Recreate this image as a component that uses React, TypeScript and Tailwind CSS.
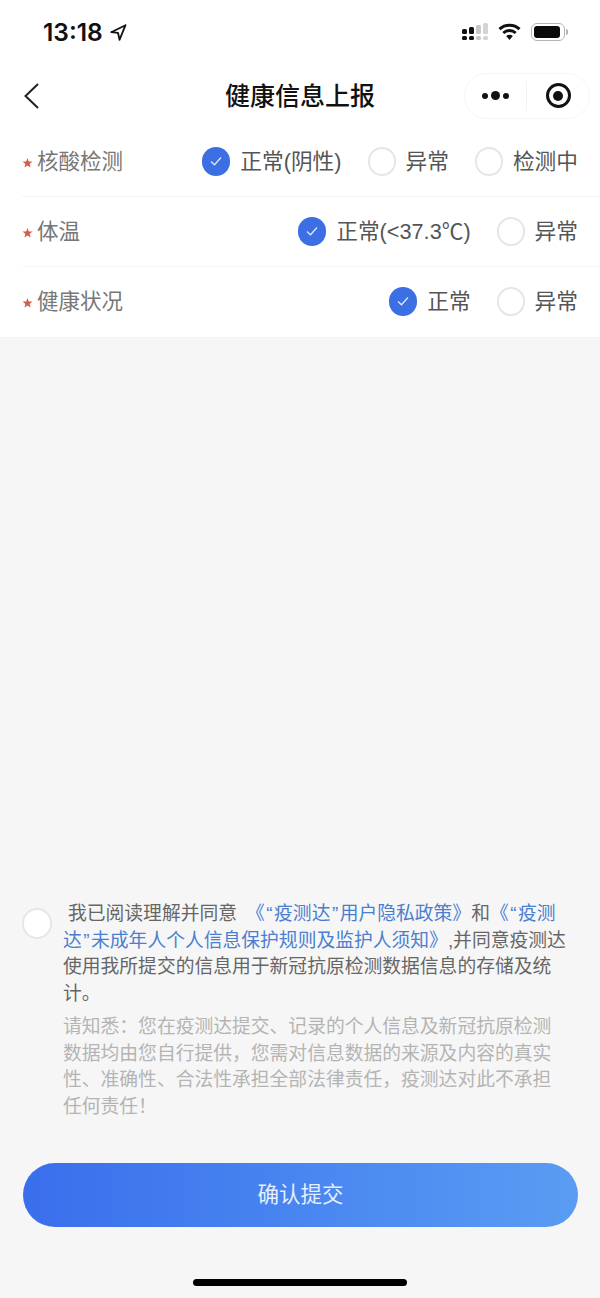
const cjk = { fontFamily: '"Liberation Sans", "Noto Sans CJK SC", "Noto Sans", sans-serif' };

function Radio({ checked = false }: { checked?: boolean }) {
  if (checked) {
    return (
      <span className="flex h-[29px] w-[28px] items-center justify-center rounded-full bg-[#3b6fe3]">
        <svg width="14" height="12" viewBox="0 0 14 12" fill="none">
          <path d="M2 6.5 L5.5 9.8 L12 2.5" stroke="#dfe8fb" strokeWidth="1.3" />
        </svg>
      </span>
    );
  }
  return <span className="h-[29px] w-[28px] rounded-full border-2 border-[#e6e6e6] bg-white" />;
}

function Row({ label, options, last = false }: { label: string; options: string[]; last?: boolean }) {
  return (
    <div className={last ? "flex h-[70px] items-center justify-between border-b border-transparent pr-[22px]" : "flex h-[70px] items-center justify-between border-b border-[#f5f5f5] pr-[22px]"}>
      <div className="flex items-center text-[21.5px] text-[#777777]">
        <svg width="15" height="10" viewBox="0 0 15 10" className="mt-[3px]">
          <path d="M5.5 0 L6.8 3.4 L10.5 3.6 L7.6 5.9 L8.6 9.5 L5.5 7.5 L2.4 9.5 L3.4 5.9 L0.5 3.6 L4.2 3.4 Z" fill="#d0604c" />
        </svg>
        <span className="pt-[2px]">{label}</span>
      </div>
      <div className="flex items-center gap-[26px]">
        {options.map((o, i) => (
          <div key={o} className="flex items-center gap-[10px] text-[21.7px] text-[#555555]">
            <Radio checked={i === 0} />
            <span className="pt-[2px]">{o}</span>
          </div>
        ))}
      </div>
    </div>
  );
}

// curly quotes sit a little wider in the reference than in Liberation Sans
function Q({ children }: { children: string }) {
  return <span className="px-[1.5px]">{children}</span>;
}

export default function App() {
  return (
    <div className="flex h-[1298px] w-[600px] flex-col overflow-hidden bg-[#f6f6f6]" style={cjk}>
      <div className="bg-white">
        {/* status bar */}
        <div className="flex h-[64px] items-center justify-between pl-[43px] pr-[32px]">
          <div className="flex items-center gap-[7px]">
            <span className="text-[24.5px] font-semibold leading-none text-[#111]" style={{ fontFamily: "Inter, sans-serif" }}>
              13:18
            </span>
            <svg width="17" height="17" viewBox="0 0 17 17" fill="none">
              <path d="M15.5 1.2 L1.2 8.2 L8 8.8 L9.5 15.8 Z" stroke="#111" strokeWidth="1.8" strokeLinejoin="round" />
            </svg>
          </div>
          <div className="flex items-center gap-[10px]">
            <svg width="26" height="18" viewBox="0 0 26 18">
              <rect x="0" y="6" width="5" height="5" rx="1.5" fill="#111" />
              <rect x="0" y="13" width="5" height="4" rx="1.5" fill="#111" />
              <rect x="7" y="4" width="5" height="7" rx="1.5" fill="#111" />
              <rect x="7" y="13" width="5" height="4" rx="1.5" fill="#111" />
              <rect x="14" y="2" width="5" height="9" rx="1.5" fill="#c8c8c8" />
              <rect x="14" y="13" width="5" height="4" rx="1.5" fill="#c8c8c8" />
              <rect x="21" y="0" width="5" height="11" rx="1.5" fill="#d4d4d4" />
              <rect x="21" y="13" width="5" height="4" rx="1.5" fill="#d4d4d4" />
            </svg>
            <svg width="23" height="18" viewBox="0 0 23 18" fill="none">
              <path d="M1.5 6.2 C7 1 16 1 21.5 6.2" stroke="#111" strokeWidth="3" />
              <path d="M5.3 10 C8.8 6.8 14.2 6.8 17.7 10" stroke="#111" strokeWidth="3" />
              <path d="M8.2 13 L11.5 17 L14.8 13 C13 11.4 10 11.4 8.2 13 Z" fill="#111" />
            </svg>
            <div className="flex items-center">
              <div className="flex h-[18px] w-[34px] items-center rounded-[6px] border border-[#b5b5b5] p-[2px]">
                <div className="h-full w-[26px] rounded-[3px] bg-[#0a0a0a]" />
              </div>
              <div className="ml-[1px] h-[6px] w-[2px] rounded-r-sm bg-[#b5b5b5]" />
            </div>
          </div>
        </div>

        {/* nav bar */}
        <div className="grid h-[63px] grid-cols-[minmax(0,1fr)_auto_minmax(0,1fr)] items-center px-[10px]">
          <svg width="20" height="30" viewBox="0 0 20 30" fill="none" className="ml-[12px]">
            <path d="M16 3 L3.5 15 L16 27" stroke="#222" strokeWidth="2" />
          </svg>
          <div className="pt-[2px] text-[25px] font-medium text-[#111]">健康信息上报</div>
          <div className="flex justify-end">
            <div className="flex h-[46px] w-[126px] items-center rounded-full border border-[#f5f5f5] bg-white">
              <div className="flex w-[61px] items-center justify-center gap-[3px]">
                <span className="h-[6px] w-[6px] rounded-full bg-[#111]" />
                <span className="h-[9px] w-[9px] rounded-full bg-[#111]" />
                <span className="h-[6px] w-[6px] rounded-full bg-[#111]" />
              </div>
              <div className="h-[30px] w-px bg-[#f2f2f2]" />
              <div className="flex flex-1 items-center justify-center">
                <span className="flex h-[25px] w-[25px] items-center justify-center rounded-full border-[3px] border-[#111]">
                  <span className="h-[10px] w-[10px] rounded-full bg-[#111]" />
                </span>
              </div>
            </div>
          </div>
        </div>

        {/* form */}
        <div className="pl-[22px]">
          <Row label="核酸检测" options={["正常(阴性)", "异常", "检测中"]} />
          <Row label="体温" options={["正常(<37.3℃)", "异常"]} />
          <Row label="健康状况" options={["正常", "异常"]} last />
        </div>
      </div>

      {/* agreement */}
      <div className="flex flex-1 flex-col justify-end px-[22px]">
        <div className="flex">
          <span className="mt-[7px] h-[31px] w-[30px] shrink-0 rounded-full border-2 border-[#e6e6e6] bg-white" />
          <div className="ml-[11px] w-[505px] text-[18.8px] leading-[26.5px]">
            <p className="text-[#666666]">
              <span className="ml-[5px]">我已阅读理解并同意</span>
              <span className="ml-[9px] text-[#4a7fd0]">
                《<Q>“</Q>疫测达<Q>”</Q>用户隐私政策》
              </span>
              和
              <span className="text-[#4a7fd0]">
                《<Q>“</Q>疫测达<Q>”</Q>未成年人个人信息保护规则及监护人须知》
              </span>
              ,并同意疫测达使用我所提交的信息用于新冠抗原检测数据信息的存储及统计。
            </p>
            <p className="mt-[7px] text-[#b4b4b4]">
              请知悉：您在疫测达提交、记录的个人信息及新冠抗原检测数据均由您自行提供，您需对信息数据的来源及内容的真实性、准确性、合法性承担全部法律责任，疫测达对此不承担任何责任！
            </p>
          </div>
        </div>

        <div className="ml-[1px] mt-[43px] flex h-[64px] items-center justify-center rounded-full bg-gradient-to-r from-[#3a6eec] to-[#5a9cf3] text-[21.5px] text-[#e6eefc]">
          确认提交
        </div>

        <div className="flex h-[71px] items-end justify-center pb-[12px]">
          <div className="h-[7px] w-[214px] rounded-full bg-black" />
        </div>
      </div>
    </div>
  );
}
